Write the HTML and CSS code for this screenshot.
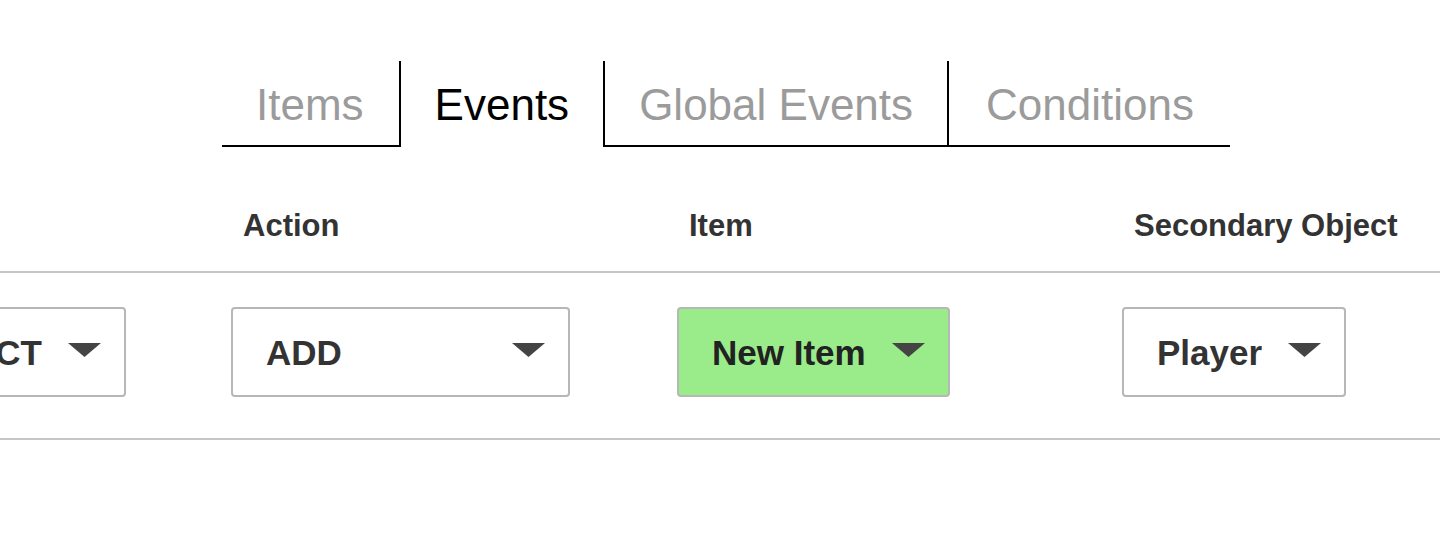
FILE: index.html
```html
<!DOCTYPE html>
<html lang="en">
<head>
<meta charset="utf-8">
<title>Events</title>
<link rel="stylesheet" href="styles.css">
</head>
<body>
<nav class="tabs">
  <div class="tab tab-items">Items</div>
  <div class="tab tab-active">Events</div>
  <div class="tab tab-global">Global Events</div>
  <div class="tab tab-conditions">Conditions</div>
</nav>
<div class="table">
  <div class="row head">
    <div class="cell"></div>
    <div class="cell"><span class="th">Action</span></div>
    <div class="cell"><span class="th">Item</span></div>
    <div class="cell"><span class="th">Secondary Object</span></div>
  </div>
  <div class="row body">
    <div class="cell cell-first">
      <div class="select"><span>OBJECT</span><svg class="caret" viewBox="0 0 33 14"><path d="M0 0H33L16.5 14Z"/></svg></div>
    </div>
    <div class="cell">
      <div class="select select-wide"><span>ADD</span><svg class="caret" viewBox="0 0 33 14"><path d="M0 0H33L16.5 14Z"/></svg></div>
    </div>
    <div class="cell">
      <div class="select select-green"><span>New Item</span><svg class="caret" viewBox="0 0 33 14"><path d="M0 0H33L16.5 14Z"/></svg></div>
    </div>
    <div class="cell">
      <div class="select"><span>Player</span><svg class="caret" viewBox="0 0 33 14"><path d="M0 0H33L16.5 14Z"/></svg></div>
    </div>
  </div>
</div>
</body>
</html>
```
FILE: styles.css
```css
html, body {
  margin: 0;
  padding: 0;
  background: #fff;
  overflow: hidden;
}
body {
  font-family: "Liberation Sans", Arial, Helvetica, sans-serif;
  width: 1440px;
  height: 560px;
}
.tabs {
  display: flex;
  justify-content: center;
  padding-top: 61px;
  padding-left: 12px;
}
.tab {
  font-size: 44px;
  line-height: 50px;
  padding: 19px 35px 15px;
  color: #9b9b9b;
  border-bottom: 2px solid #000;
}
.tab-items {
  padding-left: 34px;
  border-right: 2px solid #000;
}
.tab-active {
  padding: 19px 34px 15px;
  color: #000;
  border-bottom-color: transparent;
}
.tab-global {
  padding: 19px 34px 15px;
  border-left: 2px solid #000;
  border-right: 2px solid #000;
}
.tab-conditions {
  padding: 19px 36px 15px 37px;
}
.row {
  display: grid;
  grid-template-columns: 231px 446px 445px 1fr;
}
.head {
  padding: 62px 0 28px;
  border-bottom: 2px solid #c6c6c6;
}
.th {
  display: block;
  padding-left: 12px;
  font-size: 31px;
  line-height: 34px;
  font-weight: bold;
  color: #333;
  white-space: nowrap;
}
.body {
  padding: 34px 0 41px;
  border-bottom: 2px solid #c6c6c6;
}
.cell {
  display: flex;
  min-width: 0;
}
.cell-first {
  justify-content: flex-end;
  padding-right: 105px;
}
.select {
  box-sizing: border-box;
  flex: none;
  height: 90px;
  display: flex;
  align-items: center;
  gap: 26px;
  padding: 0 23px 0 33px;
  border: 2px solid #b7b7b7;
  border-radius: 4px;
  background: #fff;
  color: #333;
  font-size: 35px;
  font-weight: bold;
  white-space: nowrap;
}
.select span {
  padding-top: 2px;
}
.select-wide {
  width: 339px;
  justify-content: space-between;
}
.select-green {
  background: #9aeb89;
  color: #222;
}
.caret {
  width: 33px;
  height: 14px;
  fill: #444;
  margin-top: -4px;
}
```
